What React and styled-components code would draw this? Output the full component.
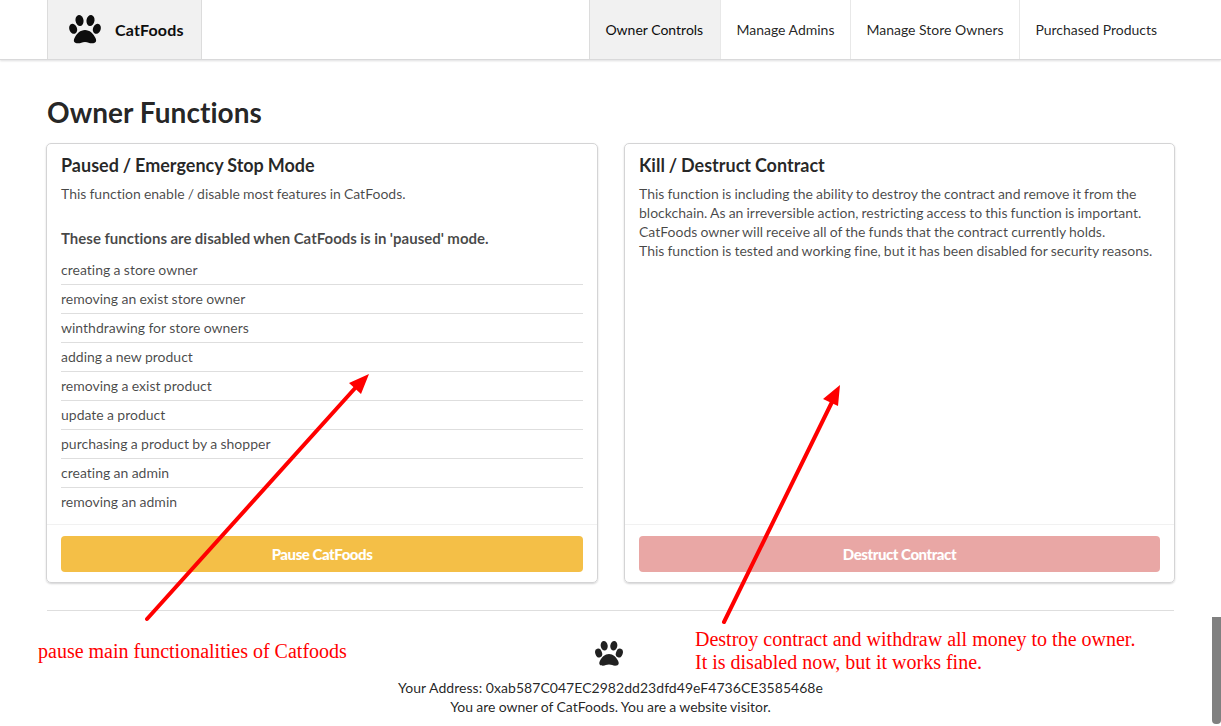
import React from 'react';
import styled, { createGlobalStyle } from 'styled-components';

const GlobalStyle = createGlobalStyle`
  *, *::before, *::after { box-sizing: border-box; }
  body {
    margin: 0;
    background: #fff;
    color: rgba(0, 0, 0, 0.87);
    font: 14px/19px Lato, 'Liberation Sans', sans-serif;
    font-variant-ligatures: none;
    overflow: hidden;
  }
`;

const Page = styled.div`
  position: relative;
  height: 726px;
  overflow: hidden;
`;

const Navbar = styled.header`
  height: 60px;
  padding: 0 47px;
  display: flex;
  justify-content: space-between;
  border-bottom: 1px solid #d9d9da;
  box-shadow: 0 1px 2px rgba(34, 36, 38, 0.15);
`;

const Brand = styled.a`
  width: 155px;
  display: flex;
  align-items: center;
  padding-left: 21px;
  gap: 14px;
  background: #f1f1f1;
  border: solid #dcdcdc;
  border-width: 0 1px;
  color: #0d0d0d;
  font-size: 16px;
  font-weight: 700;
  letter-spacing: 0.15px;
`;

const Menu = styled.nav`
  display: flex;
`;

const MenuItem = styled.a`
  display: flex;
  align-items: center;
  width: ${(p) => p.$width}px;
  padding: 0 0 1px 15.4px;
  border-left: 1px solid ${(p) => (p.$active ? '#dcdcdc' : '#e8e8e8')};
  background: ${(p) => (p.$active ? '#f1f1f1' : 'transparent')};
  color: ${(p) => (p.$active ? '#0d0d0d' : 'rgba(0, 0, 0, 0.87)')};
  white-space: nowrap;
`;

const Main = styled.main`
  padding: 34px 46px 0;
`;

const Title = styled.h1`
  margin: 0 1px 13px;
  font-size: 28px;
  line-height: 36px;
  font-weight: 700;
  letter-spacing: 0.05px;
`;

const Cards = styled.div`
  display: grid;
  grid-template-columns: 552px 551px;
  gap: 26px;
`;

const Card = styled.section`
  height: 440px;
  display: flex;
  flex-direction: column;
  border: 1px solid #d4d4d5;
  border-radius: 5px;
  box-shadow: 0 1px 2px #d4d4d5;
`;

const CardBody = styled.div`
  flex: 1;
  padding: 10px 14px 0;
  color: rgba(0, 0, 0, 0.72);
  white-space: nowrap;
  word-spacing: -0.5px;
`;

const CardTitle = styled.h2`
  margin: 0 0 8px;
  color: rgba(0, 0, 0, 0.85);
  font-size: 18px;
  line-height: 22px;
  font-weight: 700;
`;

const Text = styled.p`
  margin: 0;
`;

const ListTitle = styled.h3`
  margin: 26px 0 8px;
  font-size: 15px;
  line-height: 19px;
  font-weight: 700;
  word-spacing: -0.2px;
`;

const List = styled.ul`
  margin: 0;
  padding: 0;
  list-style: none;
  word-spacing: -0.25px;
`;

const ListItem = styled.li`
  height: 29px;
  padding-top: 4px;
  border-bottom: 1px solid #dedede;
  &:last-child { border-bottom: 0; }
`;

const CardFooter = styled.div`
  height: 58px;
  padding: 11px 14px 0;
  border-top: 1px solid #f1f1f1;
`;

const Button = styled.button`
  width: 100%;
  height: 36px;
  border: 0;
  border-radius: 4px;
  background: ${(p) => p.$color};
  color: #fff;
  font: 900 15px/15px Lato, 'Liberation Sans', sans-serif;
  letter-spacing: -0.45px;
`;

const Footer = styled.footer`
  margin: 27px 1px 0;
  padding-top: 30px;
  border-top: 1px solid #dedede;
  text-align: center;
`;

const FooterIcon = styled.div`
  height: 37px;
  padding-right: 4px;
  svg { display: block; margin: 0 auto; color: rgba(0, 0, 0, 0.87); }
`;

const Address = styled(Text)`
  letter-spacing: 0.04px;
`;

const Role = styled(Text)`
  word-spacing: -0.35px;
`;

const ScrollThumb = styled.div`
  position: absolute;
  right: 0;
  top: 617px;
  width: 9px;
  height: 107px;
  border-radius: 0 0 4px 4px;
  background: #808080;
`;

const Arrows = styled.svg`
  position: absolute;
  inset: 0;
  pointer-events: none;
`;

const Note = styled.p`
  position: absolute;
  left: ${(p) => p.$x}px;
  top: ${(p) => p.$y}px;
  margin: 0;
  color: #f00;
  font: 20px/23px 'Liberation Serif', serif;
  white-space: nowrap;
`;

const Paw = ({ size }) => (
  <svg width={size} height={size * 0.885} viewBox="0 0 96 85" fill="currentColor" aria-hidden="true">
    <ellipse cx="31.5" cy="16.5" rx="12" ry="16.5" transform="rotate(-9 31.5 16.5)" />
    <ellipse cx="64.5" cy="16.5" rx="12" ry="16.5" transform="rotate(9 64.5 16.5)" />
    <ellipse cx="12.5" cy="41.5" rx="11.5" ry="15.5" transform="rotate(-20 12.5 41.5)" />
    <ellipse cx="83.5" cy="41.5" rx="11.5" ry="15.5" transform="rotate(20 83.5 41.5)" />
    <path d="M48 45C62 45 73 56 79 68C85 79 79 85 69 85C61 85 57 81 48 81C39 81 35 85 27 85C17 85 11 79 17 68C23 56 34 45 48 45Z" />
  </svg>
);

const menu = [
  ['Owner Controls', 131],
  ['Manage Admins', 130],
  ['Manage Store Owners', 169],
  ['Purchased Products', 155],
];

const disabledFunctions = [
  'creating a store owner',
  'removing an exist store owner',
  'winthdrawing for store owners',
  'adding a new product',
  'removing a exist product',
  'update a product',
  'purchasing a product by a shopper',
  'creating an admin',
  'removing an admin',
];

export default function App() {
  return (
    <Page>
      <GlobalStyle />
      <Navbar>
        <Brand><Paw size={32} />CatFoods</Brand>
        <Menu>
          {menu.map(([label, width], i) => (
            <MenuItem key={label} $width={width} $active={i === 0}>{label}</MenuItem>
          ))}
        </Menu>
      </Navbar>
      <Main>
        <Title>Owner Functions</Title>
        <Cards>
          <Card>
            <CardBody>
              <CardTitle>Paused / Emergency Stop Mode</CardTitle>
              <Text>This function enable / disable most features in CatFoods.</Text>
              <ListTitle>These functions are disabled when CatFoods is in 'paused' mode.</ListTitle>
              <List>
                {disabledFunctions.map((name) => <ListItem key={name}>{name}</ListItem>)}
              </List>
            </CardBody>
            <CardFooter><Button $color="#f4bf47">Pause CatFoods</Button></CardFooter>
          </Card>
          <Card>
            <CardBody>
              <CardTitle>Kill / Destruct Contract</CardTitle>
              <Text>
                This function is including the ability to destroy the contract and remove it from the<br />
                blockchain. As an irreversible action, restricting access to this function is important.<br />
                CatFoods owner will receive all of the funds that the contract currently holds.<br />
                This function is tested and working fine, but it has been disabled for security reasons.
              </Text>
            </CardBody>
            <CardFooter><Button $color="#e9a7a5">Destruct Contract</Button></CardFooter>
          </Card>
        </Cards>
        <Footer>
          <FooterIcon><Paw size={28} /></FooterIcon>
          <Address>Your Address: 0xab587C047EC2982dd23dfd49eF4736CE3585468e</Address>
          <Role>You are owner of CatFoods. You are a website visitor.</Role>
        </Footer>
      </Main>
      <ScrollThumb />
      <Arrows width="1221" height="726" viewBox="0 0 1221 726" fill="#f00" stroke="#f00">
        <path d="M147 619L357 386M724 622L832 402" strokeWidth="4" strokeLinecap="round" />
        <path d="M369 374L361 394L349 383ZM840 385L838 406L823 399Z" stroke="none" />
      </Arrows>
      <Note $x={38} $y={640}>pause main functionalities of Catfoods</Note>
      <Note $x={695} $y={628}>
        Destroy contract and withdraw all money to the owner.<br />It is disabled now, but it works fine.
      </Note>
    </Page>
  );
}
